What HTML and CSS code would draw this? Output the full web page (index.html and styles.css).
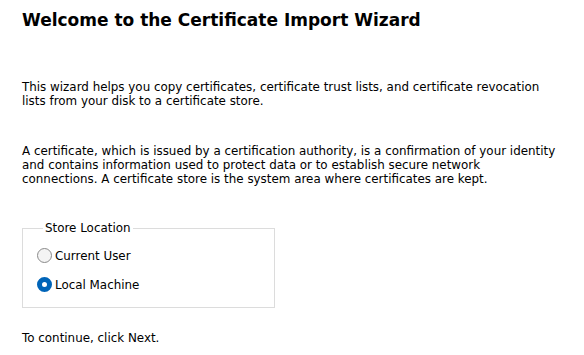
FILE: index.html
```html
<!DOCTYPE html>
<html lang="en">
<head>
    <meta charset="UTF-8">
    <title>Certificate Import Wizard</title>
    <link rel="stylesheet" href="styles.css">
</head>
<body>
    <div class="page">
        <h1 class="title">Welcome to the Certificate Import Wizard</h1>
        <p class="text first">This wizard helps you copy certificates, certificate trust lists, and certificate revocation<br>lists from your disk to a certificate store.</p>
        <p class="text">A certificate, which is issued by a certification authority, is a confirmation of your identity<br>and contains information used to protect data or to establish secure network<br>connections. A certificate store is the system area where certificates are kept.</p>
        <fieldset class="group">
            <legend>Store Location</legend>
            <label class="radio">
                <input type="radio" name="store">
                <i></i>
                <span>Current User</span>
            </label>
            <label class="radio">
                <input type="radio" name="store" checked>
                <i></i>
                <span>Local Machine</span>
            </label>
        </fieldset>
        <p class="text last">To continue, click Next.</p>
    </div>
</body>
</html>
```

FILE: styles.css
```css
html, body {
    margin: 0;
    width: 100%;
    height: 100%;
    background: #fff;
}
.page {
    width: 555px;
    padding: 9px 0 0 22px;
    font-family: "DejaVu Sans", Verdana, sans-serif;
    font-size: 11.9px;
    color: #000;
}
.title {
    margin: 0;
    font-family: "DejaVu Sans", Verdana, sans-serif;
    font-size: 17px;
    font-weight: bold;
    line-height: 22px;
}
.text {
    margin: 0;
    line-height: 14px;
    white-space: nowrap;
}
.text.first {
    margin-top: 49px;
}
.text + .text {
    margin-top: 36px;
}
.group {
    width: 253px;
    box-sizing: border-box;
    margin: 35px 0 0;
    padding: 6px 0 8px 14px;
    border: 1px solid #dcdcdc;
}
.group legend {
    padding: 0 2px;
    margin-left: 6px;
    line-height: 14px;
}
.radio {
    display: flex;
    align-items: center;
    height: 29px;
    cursor: pointer;
}
.radio input {
    display: none;
}
.radio i {
    display: block;
    width: 15px;
    height: 15px;
    box-sizing: border-box;
    border-radius: 50%;
    border: 1px solid #8a8a8a;
    background: #f4f4f4;
    margin-right: 3px;
}
.radio input:checked + i {
    border: 5px solid #0064b8;
    background: #fff;
}
.text.last {
    margin-top: 23px;
}
```
